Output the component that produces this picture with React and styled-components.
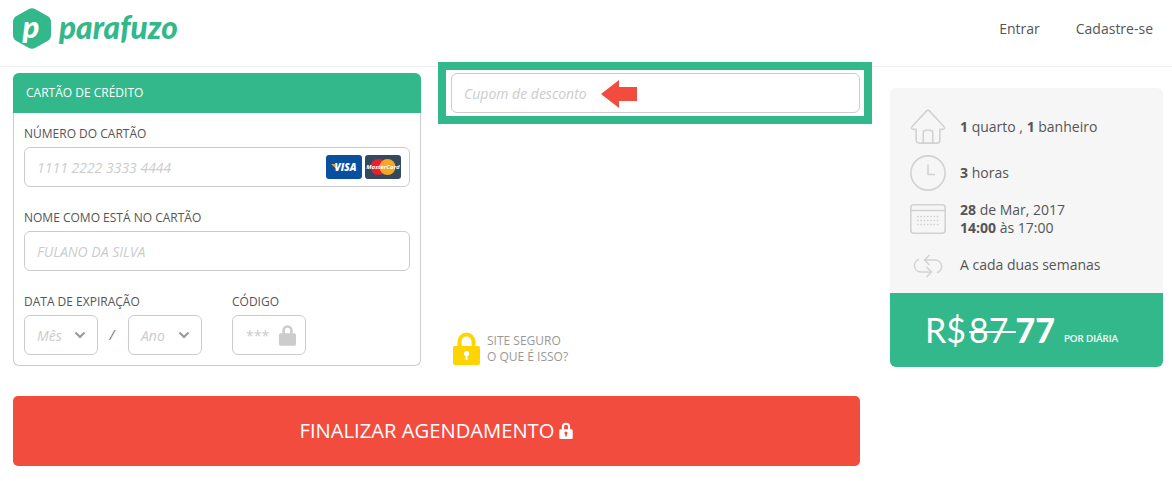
import React from "react"
import styled, { createGlobalStyle } from 'styled-components'

const GREEN = '#33b88b'
const RED = '#f24c3f'

const Global = createGlobalStyle`
  * { box-sizing: border-box; }
  body {
    margin: 0;
    background: #fff;
    color: #555;
    font-family: "Open Sans", "Liberation Sans", sans-serif;
  }
  input::placeholder { color: #ccc; opacity: 1; }
`

const Header = styled.header`
  height: 67px;
  padding: 8px 19px 0 13px;
  display: flex;
  justify-content: space-between;
  border-bottom: 1px solid #f0f0f0;
`

const Logo = styled.div`
  display: flex;
  align-items: flex-start;
  gap: 8px;
`

const LogoBadge = styled.div`
  position: relative;
  width: 38px;
  height: 41px;

  svg { display: block; }
`

const LogoLetter = styled.span`
  position: absolute;
  top: 0;
  left: -1px;
  width: 38px;
  text-align: center;
  font-family: Lato, sans-serif;
  font-style: italic;
  font-weight: 900;
  font-size: 31px;
  line-height: 36px;
  color: #fff;
`

const LogoName = styled.span`
  font-family: Lato, sans-serif;
  font-style: italic;
  font-weight: 900;
  font-size: 31.500px;
  line-height: 38px;
  color: ${GREEN};
`

const Nav = styled.nav`
  display: flex;
  gap: 36px;
  padding-top: 11px;
  font-size: 14px;
  line-height: 19px;
`

const Page = styled.main`
  padding: 6px 9px 0 13px;
  display: flex;
  justify-content: space-between;
`

const Checkout = styled.div`
  width: 847px;
  display: grid;
  grid-template-columns: 408px 409px;
  column-gap: 30px;
  row-gap: 30px;
`

const Card = styled.section`
  height: 293px;
  border: 1px solid #ccc;
  border-top: 0;
  border-radius: 6px;
`

const CardTitle = styled.h2`
  margin: 0 -1px;
  height: 40px;
  padding-left: 13px;
  background: ${GREEN};
  border-radius: 6px 6px 0 0;
  color: #fff;
  font-size: 12px;
  font-weight: 500;
  line-height: 39px;
`

const CardBody = styled.div`
  padding: 12px 10px 0;
`

const Field = styled.div`
  margin-bottom: 22px;
`

const Label = styled.label`
  display: block;
  height: 22px;
  font-size: 12px;
  line-height: 18px;
  color: #555;
`

const InputBox = styled.div`
  position: relative;
  height: 40px;
  width: ${p => p.$width || '100%'};
  border: 1px solid #ccc;
  border-radius: 6px;
  background: #fff;
`

const Input = styled.input`
  width: 100%;
  height: 100%;
  padding: 0 12px;
  border: 0;
  border-radius: 6px;
  background: transparent;
  outline: none;
  font: italic 14px "Open Sans", sans-serif;
`

const Brands = styled.div`
  position: absolute;
  top: 7px;
  right: 8px;
  display: flex;
  gap: 3px;
`

const Row = styled.div`
  display: flex;
  align-items: flex-start;
`

const SelectBox = styled(InputBox)`
  display: flex;
  align-items: center;
  justify-content: space-between;
  padding: 0 11px 0 12px;
  width: 74px;
  font-style: italic;
  font-size: 14px;
  color: #ccc;
`

const Slash = styled.span`
  width: 30px;
  padding-right: 2px;
  text-align: center;
  font-size: 14px;
  line-height: 40px;
  font-style: italic;
  color: #777;
`

const CodeGroup = styled.div`
  margin-left: 30px;
  margin-top: -22px;
`

const DateGroup = styled.div`
  display: flex;
`

const CodeBox = styled(InputBox)`
  display: flex;
  align-items: center;
  justify-content: space-between;
  width: 74px;
  padding: 0 9px 0 13px;
  font-size: 14px;
  color: #ccc;
`

const Side = styled.div`
  position: relative;
  display: flex;
  flex-direction: column;
  justify-content: space-between;
  padding-bottom: 1px;
`

const Highlight = styled.div`
  position: absolute;
  top: -12px;
  left: -14px;
  width: 434px;
  height: 62px;
  border: 8px solid ${GREEN};
  pointer-events: none;
`

const Arrow = styled.svg`
  position: absolute;
  top: 6px;
  left: 149px;
`

const Secure = styled.div`
  display: flex;
  align-items: center;
  gap: 7px;
  padding-left: 2px;
  font-size: 12px;
  line-height: 16px;
  color: #999;
`

const PayButton = styled.button`
  grid-column: 1 / 3;
  height: 70px;
  padding: 0 0 2px;
  border: 0;
  border-radius: 5px;
  background: ${RED};
  color: #fff;
  font: 20.200px "Open Sans", sans-serif;
  display: flex;
  align-items: center;
  justify-content: center;
  gap: 5px;
`

const Summary = styled.aside`
  width: 273px;
  height: 279px;
  margin-top: 15px;
  border-radius: 6px;
  overflow: hidden;
  background: #f6f6f6;
  display: flex;
  flex-direction: column;
`

const Details = styled.div`
  flex: 1;
  padding: 16px 0 0 20px;
`

const Detail = styled.div`
  display: flex;
  align-items: center;
  height: 46px;
  font-size: 14px;
  line-height: 18px;
  color: #555;

  b { font-weight: 700; }
`

const DetailIcon = styled.div`
  width: 50px;
  display: flex;
  justify-content: center;
  padding-right: 14px;
`

const Price = styled.div`
  height: 74px;
  background: ${GREEN};
  color: #fff;
  font-family: Lato, sans-serif;
  padding-left: 35px;
  display: flex;
  align-items: center;
  font-size: 34px;
  line-height: 40px;
`

const Old = styled.span`
  position: relative;
  margin-left: 3px;
  margin-right: -1px;
  padding-right: 8px;

  &::after {
    content: "";
    position: absolute;
    left: 0;
    right: 0;
    top: 21px;
    height: 2px;
    background: #fff;
  }
`

const Now = styled.b`
  font-weight: 900;
`

const PerDay = styled.span`
  margin: 17px 0 0 9px;
  font-size: 9.500px;
  font-weight: 700;
  line-height: 12px;
  opacity: .9;
`

const Chevron = () => (
  <svg width="12" height="8" viewBox="0 0 12 8" fill="none" stroke="#999" strokeWidth="2">
    <path d="M1.500 1.500l4.500 4.500 4.500-4.500" />
  </svg>
)

const HouseIcon = () => (
  <svg width="38" height="38" viewBox="0 0 38 38" fill="none" stroke="#d2d2d2" strokeWidth="1.700" strokeLinejoin="round" strokeLinecap="round">
    <path d="M6.500 21.500H3.500C1.500 21.500 1 20 2 18.800L17.500 2c.8-.8 2.200-.8 3 0L36 18.800c1 1.200.5 2.700-1.500 2.700h-3V33a3 3 0 0 1-3 3H9.500a3 3 0 0 1-3-3z" />
    <path d="M14 36V25a2.500 2.500 0 0 1 2.500-2.500h5A2.500 2.500 0 0 1 24 25v11" />
  </svg>
)

const ClockIcon = () => (
  <svg width="36" height="36" viewBox="0 0 36 36" fill="none" stroke="#d2d2d2" strokeWidth="1.600">
    <circle cx="18" cy="18" r="17.100" />
    <path d="M18 9.500V19.500h7" />
  </svg>
)

const CalendarIcon = () => (
  <svg width="36" height="30" viewBox="0 0 36 30" fill="none" stroke="#d2d2d2" strokeWidth="1.600">
    <rect x=".8" y=".8" width="34.400" height="28.400" rx="3" />
    <path d="M1 6.500h34" />
    <path d="M7 12.500h22M7 16.500h22M7 20.500h22" strokeWidth="1.600" strokeDasharray="1.600 1.700" />
  </svg>
)

const RepeatIcon = () => (
  <svg width="30" height="26" viewBox="0 0 30 26" fill="none" stroke="#d2d2d2" strokeWidth="1.500">
    <path d="M12 8h10a6.500 6.500 0 0 1 2 12.700" />
    <path d="M16.500 3l-5 5 5 5" />
    <path d="M18 20H8A6.500 6.500 0 0 1 6 7.300" />
    <path d="M13.500 15l5 5-5 5" />
  </svg>
)

const LockIcon = ({ color, w, h }) => (
  <svg width={w} height={h} viewBox="0 0 26 33" fill={color}>
    <path fillRule="evenodd" d="M5 14V9.500a8 8 0 0 1 16 0V14h2.500A2.500 2.500 0 0 1 26 16.500v14a2.500 2.500 0 0 1-2.500 2.500h-21A2.500 2.500 0 0 1 0 30.500v-14A2.500 2.500 0 0 1 2.500 14H5zm4 0h8V9.500a4 4 0 0 0-8 0V14z" />
  </svg>
)

const ButtonLock = () => (
  <svg width="14" height="17" viewBox="0 0 26 33">
    <path fill="#fff" fillRule="evenodd" d="M5 14V9.500a8 8 0 0 1 16 0V14h2.500A2.500 2.500 0 0 1 26 16.500v14a2.500 2.500 0 0 1-2.500 2.500h-21A2.500 2.500 0 0 1 0 30.500v-14A2.500 2.500 0 0 1 2.500 14H5zm4 0h8V9.500a4 4 0 0 0-8 0V14z" />
    <circle cx="13" cy="21.500" r="3" fill={RED} />
    <rect x="11.500" y="22" width="3" height="6" fill={RED} />
  </svg>
)

const SecureLock = () => (
  <svg width="27" height="33" viewBox="0 0 27 33">
    <path fill="#ffd400" fillRule="evenodd" d="M4.500 14V9.500a9 9 0 0 1 18 0V14h2.500a2 2 0 0 1 2 2v15a2 2 0 0 1-2 2H2a2 2 0 0 1-2-2V16a2 2 0 0 1 2-2h2.500zm4 0h10V9.500a5 5 0 0 0-10 0V14z" />
    <circle cx="13.500" cy="21.500" r="2.600" fill="#fff" />
    <rect x="12.500" y="22" width="2" height="6" fill="#fff" />
  </svg>
)

const VisaCard = () => (
  <svg width="36" height="24" viewBox="0 0 36 24">
    <rect width="36" height="24" rx="3" fill="#0a50a1" />
    <path d="M5 9h4l1.500 5z" fill="#f0a31f" />
    <text x="19.500" y="16" textAnchor="middle" fontFamily="Open Sans, sans-serif" fontStyle="italic" fontWeight="800" fontSize="10" fill="#fff">VISA</text>
  </svg>
)

const MasterCard = () => (
  <svg width="36" height="24" viewBox="0 0 36 24">
    <rect width="36" height="24" rx="3" fill="#34495e" />
    <circle cx="13.500" cy="12" r="8" fill="#e8202e" />
    <circle cx="22.500" cy="12" r="8" fill="#f6a723" />
    <text x="18" y="14" textAnchor="middle" fontFamily="Open Sans, sans-serif" fontStyle="italic" fontWeight="700" fontSize="6" fill="#fff">MasterCard</text>
  </svg>
)

const LogoMark = () => (
  <LogoBadge>
    <svg width="38" height="41" viewBox="0 0 38 41">
      <path fill={GREEN} d="M15.500 1.200a7 7 0 0 1 7 0l12 6.800a7 7 0 0 1 3.500 6v13a7 7 0 0 1-3.500 6l-12 6.800a7 7 0 0 1-7 0l-12-6.800a7 7 0 0 1-3.500-6V14a7 7 0 0 1 3.500-6z" />
    </svg>
    <LogoLetter>p</LogoLetter>
  </LogoBadge>
)

const App = () => {
  return (
    <>
      <Global />
      <Header>
        <Logo>
          <LogoMark />
          <LogoName>parafuzo</LogoName>
        </Logo>
        <Nav>
          <span>Entrar</span>
          <span>Cadastre-se</span>
        </Nav>
      </Header>
      <Page>
        <Checkout>
          <Card>
            <CardTitle>CARTÃO DE CRÉDITO</CardTitle>
            <CardBody>
              <Field>
                <Label>NÚMERO DO CARTÃO</Label>
                <InputBox>
                  <Input placeholder="1111 2222 3333 4444" />
                  <Brands>
                    <VisaCard />
                    <MasterCard />
                  </Brands>
                </InputBox>
              </Field>
              <Field>
                <Label>NOME COMO ESTÁ NO CARTÃO</Label>
                <InputBox>
                  <Input placeholder="FULANO DA SILVA" />
                </InputBox>
              </Field>
              <Label>DATA DE EXPIRAÇÃO</Label>
              <Row>
                <DateGroup>
                  <SelectBox>Mês <Chevron /></SelectBox>
                  <Slash>/</Slash>
                  <SelectBox>Ano <Chevron /></SelectBox>
                </DateGroup>
                <CodeGroup>
                  <Label>CÓDIGO</Label>
                  <CodeBox>
                    ***
                    <LockIcon color="#ccc" w={17} h={22} />
                  </CodeBox>
                </CodeGroup>
              </Row>
            </CardBody>
          </Card>
          <Side>
            <InputBox>
              <Input placeholder="Cupom de desconto" />
              <Arrow width="36" height="28" viewBox="0 0 36 28">
                <path fill={RED} d="M0 14L18 0v7h18v14H18v7z" />
              </Arrow>
              <Highlight />
            </InputBox>
            <Secure>
              <SecureLock />
              <div>
                SITE SEGURO<br />
                O QUE É ISSO?
              </div>
            </Secure>
          </Side>
          <PayButton>
            FINALIZAR AGENDAMENTO
            <ButtonLock />
          </PayButton>
        </Checkout>
        <Summary>
          <Details>
            <Detail>
              <DetailIcon><HouseIcon /></DetailIcon>
              <span><b>1</b> quarto , <b>1</b> banheiro</span>
            </Detail>
            <Detail>
              <DetailIcon><ClockIcon /></DetailIcon>
              <span><b>3</b> horas</span>
            </Detail>
            <Detail>
              <DetailIcon><CalendarIcon /></DetailIcon>
              <span><b>28</b> de Mar, 2017<br /><b>14:00</b> às 17:00</span>
            </Detail>
            <Detail>
              <DetailIcon><RepeatIcon /></DetailIcon>
              <span>A cada duas semanas</span>
            </Detail>
          </Details>
          <Price>
            R$
            <Old>87</Old>
            <Now>77</Now>
            <PerDay>POR DIÁRIA</PerDay>
          </Price>
        </Summary>
      </Page>
    </>
  )
}

export default App
